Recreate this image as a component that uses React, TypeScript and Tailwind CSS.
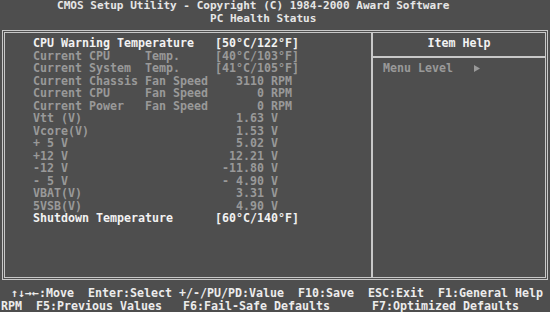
const items = [
  { label: "CPU Warning Temperature", value: "[50°C/122°F]", bright: true },
  { label: "Current CPU     Temp.", value: "[40°C/103°F]" },
  { label: "Current System  Temp.", value: "[41°C/105°F]" },
  { label: "Current Chassis Fan Speed", value: "   3110 RPM" },
  { label: "Current CPU     Fan Speed", value: "      0 RPM" },
  { label: "Current Power   Fan Speed", value: "      0 RPM" },
  { label: "Vtt (V)", value: "   1.63 V" },
  { label: "Vcore(V)", value: "   1.53 V" },
  { label: "+ 5 V", value: "   5.02 V" },
  { label: "+12 V", value: "  12.21 V" },
  { label: "-12 V", value: " -11.80 V" },
  { label: "- 5 V", value: " - 4.90 V" },
  { label: "VBAT(V)", value: "   3.31 V" },
  { label: "5VSB(V)", value: "   4.90 V" },
  { label: "Shutdown Temperature", value: "[60°C/140°F]", bright: true },
];

export default function App() {
  return (
    <div className="w-[550px] h-[312px] overflow-hidden bg-[#4e4e4e] font-['DejaVu_Sans_Mono',monospace] font-bold text-[11.63px] leading-[12.5px] whitespace-pre">
      {/* title */}
      <div className="h-[25px] text-[#e6e6e6] text-[11.05px]">
        <div className="pl-[57px]">CMOS Setup Utility - Copyright (C) 1984-2000 Award Software</div>
        <div className="pl-[210px]">PC Health Status</div>
      </div>

      {/* main frame */}
      <div className="mx-[2px] mt-[5px] h-[250px] border-[3px] border-double border-[#c8c8c8] flex">
        <div className="w-[366px] pl-[28px] pt-[4px] flex flex-col">
          {items.map((item) => (
            <div
              key={item.label}
              className={`flex ${item.bright ? "text-[#f2f2f2]" : "text-[#999999]"}`}
            >
              <span className="w-[182px]">{item.label}</span>
              <span>{item.value}</span>
            </div>
          ))}
        </div>

        <div className="flex-1 border-l-2 border-[#c8c8c8] flex flex-col">
          <div className="h-[25px] pt-[4px] border-b-2 border-[#c8c8c8] text-center text-[#f2f2f2]">
            Item Help
          </div>
          <div className="pt-[4px] pl-[10px] text-[#999999] flex items-center">
            <span>Menu Level   </span>
            <svg width="6" height="7" viewBox="0 0 6 7" className="fill-[#999999]">
              <path d="M0 0 L6 3.5 L0 7 Z" />
            </svg>
          </div>
        </div>
      </div>

      {/* key legend */}
      <div className="mt-[7px] text-[#ececec]">
        <div className="pl-[11px]">↑↓→←:Move  Enter:Select +/-/PU/PD:Value  F10:Save  ESC:Exit  F1:General Help</div>
        <div className="pl-[1px]">RPM  F5:Previous Values   F6:Fail-Safe Defaults      F7:Optimized Defaults</div>
      </div>
    </div>
  );
}
